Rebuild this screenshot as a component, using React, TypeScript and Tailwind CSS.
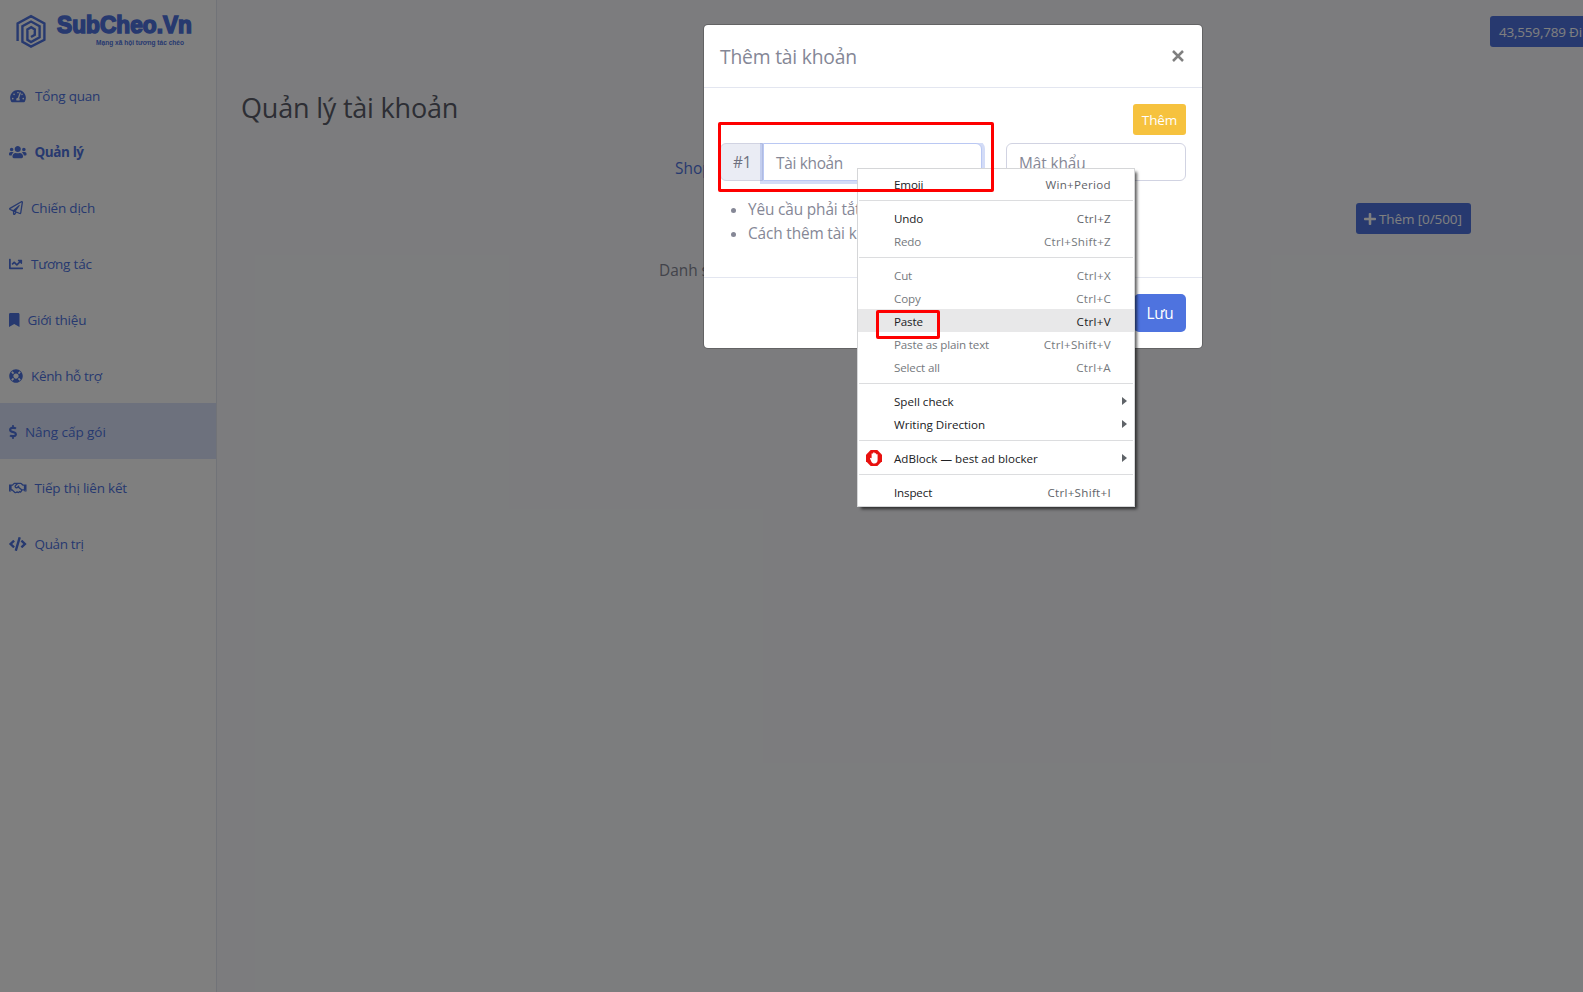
import type { ReactNode } from "react";
import {
  FaBookmark,
  FaChartLine,
  FaCode,
  FaDollarSign,
  FaLifeRing,
  FaPlus,
  FaRegHandshake,
  FaRegPaperPlane,
  FaTachometerAlt,
  FaUsers,
} from "react-icons/fa";

type NavItem = { label: string; icon: ReactNode; text?: string; active?: boolean };

const nav: NavItem[] = [
  { label: "Tổng quan", icon: <FaTachometerAlt className="mr-px ml-px h-3.5 w-4" /> },
  { label: "Quản lý", icon: <FaUsers className="h-3.5 w-[17.5px]" />, text: "font-bold tracking-[-0.4px]" },
  { label: "Chiến dịch", icon: <FaRegPaperPlane className="h-3.5 w-3.5" /> },
  { label: "Tương tác", icon: <FaChartLine className="h-3.5 w-3.5" /> },
  { label: "Giới thiệu", icon: <FaBookmark className="h-3.5 w-[10.5px]" /> },
  { label: "Kênh hỗ trợ", icon: <FaLifeRing className="h-3.5 w-3.5" />, text: "tracking-[-0.35px]" },
  { label: "Nâng cấp gói", icon: <FaDollarSign className="h-3.5 w-2" />, active: true, text: "tracking-[-0.05px]" },
  { label: "Tiếp thị liên kết", icon: <FaRegHandshake className="h-3.5 w-[17.5px]" /> },
  { label: "Quản trị", icon: <FaCode className="h-3.5 w-[17.5px]" />, text: "tracking-[-0.35px]" },
];

function Logo() {
  return (
    <svg width="200" height="67" viewBox="0 0 200 67" className="shrink-0">
      <g fill="none" stroke="#4e73df" strokeWidth="2.4">
        <path d="M17.6 41V23.4L31 16.2l13.4 7.2v16.4L31 46.6l-8.6-4.9V26.2l8.6-4.7 8.6 4.8v11L31 42l-3.6-2.2V29.4l3.8-2.2 3.6 2.2v5.4L31 37" />
      </g>
      <g fill="#4e73df">
        <text x="57" y="33" fontFamily="Liberation Sans, sans-serif" fontWeight="700" fontSize="24.5" stroke="#4e73df" strokeWidth="1.6" textLength="135" lengthAdjust="spacingAndGlyphs">
          SubCheo.Vn
        </text>
        <text x="96" y="45" fontFamily="Liberation Sans, sans-serif" fontWeight="700" fontSize="6.6" textLength="88" lengthAdjust="spacingAndGlyphs">
          Mạng xã hội tương tác chéo
        </text>
      </g>
    </svg>
  );
}

function Sidebar() {
  return (
    <aside className="flex w-[217px] shrink-0 flex-col border-r border-[#e3e6f0] bg-white">
      <Logo />
      <nav className="flex flex-col">
        {nav.map((n) => (
          <a
            key={n.label}
            className={`flex h-14 items-center gap-2 pt-0.5 pl-[9px] text-[13.5px] text-[#4e73df] ${n.active ? "bg-[#dbe3fb]" : ""}`}
          >
            {n.icon}
            <span className={`pt-px whitespace-nowrap ${n.text ?? "tracking-[-0.2px]"}`}>{n.label}</span>
          </a>
        ))}
      </nav>
    </aside>
  );
}

type Entry = { label: string; keys?: string; dim?: boolean; hover?: boolean; sub?: boolean; icon?: boolean };

const groups: Entry[][] = [
  [{ label: "Emoji", keys: "Win+Period" }],
  [
    { label: "Undo", keys: "Ctrl+Z" },
    { label: "Redo", keys: "Ctrl+Shift+Z", dim: true },
  ],
  [
    { label: "Cut", keys: "Ctrl+X", dim: true },
    { label: "Copy", keys: "Ctrl+C", dim: true },
    { label: "Paste", keys: "Ctrl+V", hover: true },
    { label: "Paste as plain text", keys: "Ctrl+Shift+V", dim: true },
    { label: "Select all", keys: "Ctrl+A", dim: true },
  ],
  [
    { label: "Spell check", sub: true },
    { label: "Writing Direction", sub: true },
  ],
  [{ label: "AdBlock — best ad blocker", sub: true, icon: true }],
  [{ label: "Inspect", keys: "Ctrl+Shift+I" }],
];

function AdBlockIcon() {
  return (
    <svg width="16" height="16" viewBox="0 0 16 16">
      <path d="M4.7 0h6.6L16 4.7v6.600L11.300 16H4.700L0 11.300V4.700z" fill="#e8110f" />
      <path
        d="M3.900 8.200l1.100-.4.6.8V3.600h1.500v-1h1.500v.6h1.500v1h1.500v5.800c0 2-1.300 3.500-3.200 3.500-1.600 0-2.400-.7-3-1.800z"
        fill="#fff"
      />
    </svg>
  );
}

function ContextMenu() {
  return (
    <div className="absolute top-[168px] left-[857px] flex w-[278px] flex-col border border-[#d5d6d8] bg-white py-[3px] text-[11.6px] text-[#202124] shadow-[3px_3px_3px_-1px_rgba(0,0,0,0.65)]">
      {groups.map((g, i) => (
        <div key={i} className="flex flex-col">
          {i > 0 && <div className="mx-px my-[5px] h-px bg-[#dcdddf]" />}
          {g.map((e) => (
            <div
              key={e.label}
              className={`flex h-[23px] items-center ${e.hover ? "bg-[#e8e8e9]" : ""} ${e.dim ? "text-[#75797d]" : ""}`}
            >
              <span className="flex w-9 items-center pl-2">{e.icon && <AdBlockIcon />}</span>
              <span className={`flex-1 pt-0.5 whitespace-nowrap ${e.sub ? "" : "tracking-[-0.15px]"}`}>{e.label}</span>
              {e.keys && (
                <span className={`pt-0.5 pr-[23px] tracking-[0.3px] ${e.hover || e.dim ? "" : "text-[#5f6368]"}`}>{e.keys}</span>
              )}
              {e.sub && (
                <svg width="5" height="8" viewBox="0 0 5 8" className="mr-[7px]">
                  <path d="M0 0l5 4-5 4z" fill="#5f6368" />
                </svg>
              )}
            </div>
          ))}
        </div>
      ))}
    </div>
  );
}

function Modal() {
  return (
    <div className="absolute top-6 left-[703px] flex w-[500px] flex-col rounded-[5px] border border-black/20 bg-white bg-clip-padding text-[15.4px] tracking-[-0.3px] text-[#858796]">
      <header className="flex h-[63px] items-center justify-between border-b border-[#e3e6f0] px-4">
        <h5 className="pt-0.5 text-[19.3px] tracking-[-0.2px]">Thêm tài khoản</h5>
        <svg width="12" height="12" viewBox="0 0 12 12" className="mr-0.5">
          <path d="M1 1l10 10M11 1L1 11" stroke="#7f7f7f" strokeWidth="2.5" />
        </svg>
      </header>
      <div className="flex h-[190px] flex-col border-b border-[#e3e6f0] p-4">
        <button className="h-[31px] w-[53px] self-end rounded-[3px] bg-[#f6c23e] pt-0.5 text-[13.5px] tracking-[-0.1px] text-white">Thêm</button>
        <div className="mt-2 flex justify-between">
          <div className="flex h-[38px] w-[262px]">
            <span className="flex w-[43px] items-center rounded-l-md border border-[#d1d3e2] bg-[#eaecf4] pt-0.5 pl-3 text-[#6e707e]">#1</span>
            <div className="flex flex-1 items-center rounded-r-md border border-[#bac8f3] bg-white pt-[3px] pl-3 shadow-[0_0_0_3px_rgba(78,115,223,0.25)] [clip-path:inset(0_-4px_-4px_-4px)]">
              Tài khoản
            </div>
          </div>
          <div className="flex h-[38px] w-[180px] items-center rounded-md border border-[#d1d3e2] pt-[3px] pl-3 tracking-[-0.1px]">Mật khẩu</div>
        </div>
        <ul className="mt-[17px] flex w-[137px] list-disc flex-col overflow-hidden pl-7 leading-6 tracking-[-0.15px] whitespace-nowrap">
          <li>Yêu cầu phải tắt</li>
          <li>Cách thêm tài k</li>
        </ul>
      </div>
      <footer className="flex justify-end p-4">
        <button className="h-[38px] w-[52px] rounded-[5px] bg-[#4e73df] pt-0.5 text-white">Lưu</button>
      </footer>
    </div>
  );
}

export default function App() {
  return (
    <div className="relative flex h-[992px] w-[1583px] overflow-hidden bg-[#f8f9fc] font-['Open_Sans','Noto_Sans',sans-serif]">
      <Sidebar />
      <main className="flex flex-1 flex-col overflow-hidden">
        <div className="flex h-[72px] justify-end pt-4">
          <div className="flex h-[31px] w-[93px] items-center rounded-l-[3px] bg-[#4e73df] pt-0.5 pl-[9px] text-[13.5px] tracking-[-0.2px] whitespace-nowrap text-white">
            43,559,789 Đi
          </div>
        </div>
        <h1 className="pt-[15px] pl-6 text-[27px] leading-[42px] tracking-[-0.2px] text-[#5a5c69]">Quản lý tài khoản</h1>
        <div className="flex pt-7 pl-[458px] text-[15.4px] leading-6 text-[#4e73df]">Shop</div>
        <div className="flex justify-end pt-[22px] pr-28">
          <button className="flex h-[31px] w-[115px] items-center gap-[3px] rounded-[3px] bg-[#4e73df] pl-2 text-[13.5px] tracking-[-0.1px] whitespace-nowrap text-white">
            <FaPlus className="h-3.5 w-3" />
            <span className="pt-0.5">Thêm [0/500]</span>
          </button>
        </div>
        <div className="pt-[25px] pl-[442px] text-[15.4px] leading-6 text-[#858796]">Danh s</div>
      </main>
      <div className="absolute inset-0 bg-black/50" />
      <Modal />
      <ContextMenu />
      <div className="absolute top-[122px] left-[718px] h-[70px] w-[276px] rounded-[2px] border-3 border-[#fe0000]" />
      <div className="absolute top-[310px] left-[876px] h-[29px] w-16 rounded-[2px] border-3 border-[#fe0000]" />
    </div>
  );
}
